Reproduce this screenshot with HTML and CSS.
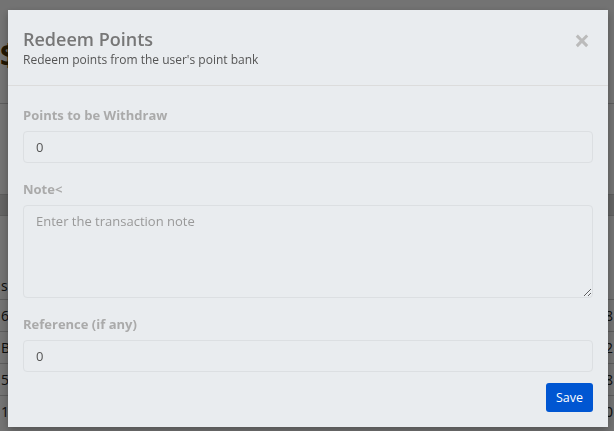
FILE: index.html
```html
<!DOCTYPE html>
<html lang="en">
<head>
    <meta charset="UTF-8">
    <meta name="viewport" content="width=device-width, initial-scale=1.0">
    <title>Redeem Points</title>
    <link rel="stylesheet" href="styles.css">
</head>
<body>
    <div class="page">
        <div class="page-title"><span>$</span></div>
        <div class="toolbar"></div>
        <div class="row head"><span></span><span></span></div>
        <div class="row tall"><span>se</span><span></span></div>
        <div class="row"><span>69</span><span>78</span></div>
        <div class="row"><span>B</span><span>22</span></div>
        <div class="row"><span>59</span><span>88</span></div>
        <div class="row"><span>10</span><span>20</span></div>
    </div>

    <div class="backdrop"></div>

    <div class="modal">
        <div class="modal-header">
            <div>
                <h3 class="modal-title">Redeem Points</h3>
                <div class="modal-sub">Redeem points from the user's point bank</div>
            </div>
            <span class="close">&times;</span>
        </div>
        <div class="modal-body">
            <label class="field-label">Points to be Withdraw</label>
            <input class="field" type="text" value="0">
            <label class="field-label">Note&lt;</label>
            <textarea class="field note" placeholder="Enter the transaction note"></textarea>
            <label class="field-label">Reference (if any)</label>
            <input class="field" type="text" value="0">
            <div class="actions">
                <button class="btn-save">Save</button>
            </div>
        </div>
    </div>
</body>
</html>
```

FILE: styles.css
```css
body {
    margin: 0;
    padding: 0;
    height: 431px;
    overflow: hidden;
    font-family: 'Open Sans', 'Noto Sans', sans-serif;
    background-color: #fff;
}
.page {
    color: #222;
    font-size: 14px;
}
.page-title {
    height: 104px;
    padding-top: 34px;
    box-sizing: border-box;
    font-size: 30px;
    font-weight: 700;
    color: #4a3000;
    border-bottom: 1px solid #ccc;
}
.toolbar {
    height: 90px;
}
.row {
    display: flex;
    justify-content: space-between;
    align-items: center;
    height: 31px;
    border-top: 1px solid #ccc;
    padding: 0 1px;
}
.row.head {
    height: 20px;
    background-color: #ddd;
}
.row.tall {
    height: 84px;
    align-items: flex-start;
    padding-top: 60px;
    box-sizing: border-box;
}
.backdrop {
    position: fixed;
    left: 0;
    top: 0;
    width: 100%;
    height: 100%;
    background-color: rgba(0, 0, 0, 0.55);
}
.modal {
    position: fixed;
    left: 8px;
    top: 10px;
    width: 600px;
    height: 417px;
    background-color: #e9ecef;
    box-shadow: 0 3px 8px rgba(0, 0, 0, 0.3);
}
.modal-header {
    display: flex;
    justify-content: space-between;
    align-items: flex-start;
    padding: 17px 15px 16px 15px;
    border-bottom: 1px solid #dcdcdc;
}
.modal-title {
    margin: 0;
    font-size: 18px;
    font-weight: 600;
    color: #777;
    line-height: 24px;
}
.modal-sub {
    font-size: 12px;
    color: #555;
    line-height: 18px;
}
.close {
    color: #bbb;
    font-size: 28px;
    font-weight: bold;
    line-height: 24px;
    margin-top: 1px;
    margin-right: 3px;
}
.modal-body {
    display: flex;
    flex-direction: column;
    padding: 21px 15px 0 15px;
}
.field-label {
    font-size: 13px;
    font-weight: 700;
    color: #aaa;
    line-height: 28px;
    margin-top: -6px;
    margin-bottom: 2px;
}
.field {
    box-sizing: border-box;
    height: 32px;
    padding: 6px 12px;
    font-family: inherit;
    font-size: 13px;
    color: #555;
    background-color: #e9ecef;
    border: 1px solid #dcdfe2;
    border-radius: 4px;
    margin-bottom: 18px;
    outline: none;
}
.field.note {
    height: 93px;
    resize: vertical;
    margin-bottom: 18px;
}
.field.note::placeholder {
    color: #999;
}
.actions {
    display: flex;
    justify-content: flex-end;
    margin-top: -7px;
}
.btn-save {
    width: 47px;
    height: 29px;
    background-color: #0056d2;
    color: #fff;
    border: none;
    border-radius: 3px;
    font-family: inherit;
    font-size: 12.5px;
}
```
